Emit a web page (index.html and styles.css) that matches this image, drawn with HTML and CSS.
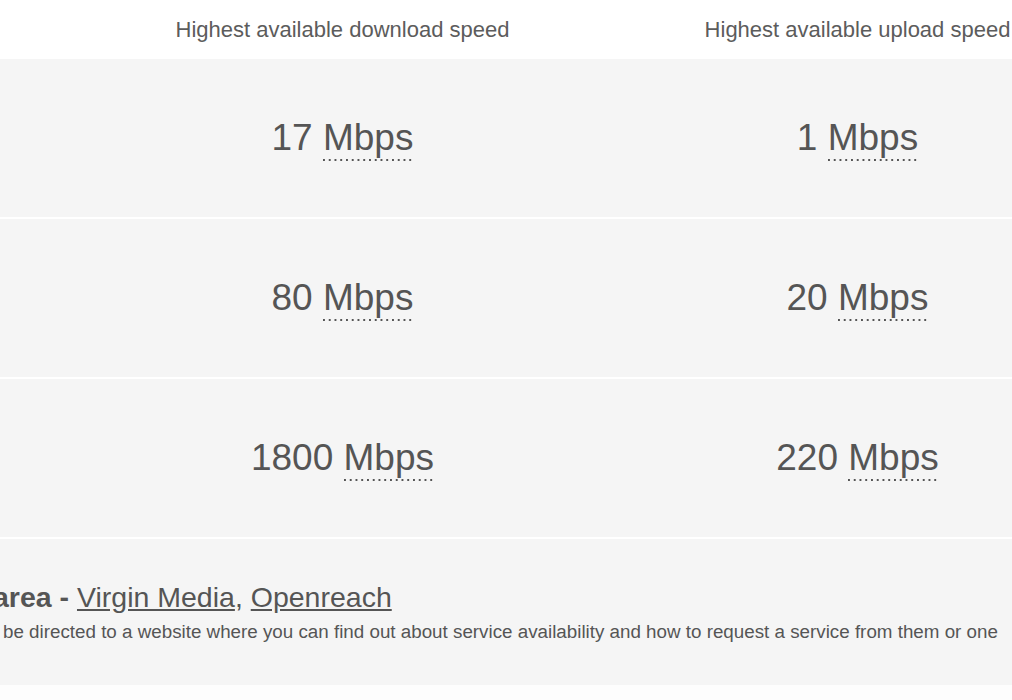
FILE: index.html
```html
<!DOCTYPE html>
<html lang="en">
<head>
    <meta charset="UTF-8">
    <meta name="viewport" content="width=device-width, initial-scale=1.0">
    <title>Broadband speeds</title>
    <link rel="stylesheet" href="styles.css">
</head>
<body>

<div class="speeds">
    <div class="row head">
        <div class="cell label"></div>
        <div class="cell">Highest available download speed</div>
        <div class="cell">Highest available upload speed</div>
    </div>
    <div class="row">
        <div class="cell label"></div>
        <div class="cell value">17 <abbr title="Megabits per second">Mbps</abbr></div>
        <div class="cell value">1 <abbr title="Megabits per second">Mbps</abbr></div>
    </div>
    <div class="row">
        <div class="cell label"></div>
        <div class="cell value">80 <abbr title="Megabits per second">Mbps</abbr></div>
        <div class="cell value">20 <abbr title="Megabits per second">Mbps</abbr></div>
    </div>
    <div class="row">
        <div class="cell label"></div>
        <div class="cell value">1800 <abbr title="Megabits per second">Mbps</abbr></div>
        <div class="cell value">220 <abbr title="Megabits per second">Mbps</abbr></div>
    </div>
</div>

<div class="providers">
    <p class="providers-title"><strong>area - </strong><a href="#">Virgin Media</a>, <a href="#">Openreach</a></p>
    <p class="providers-note">be directed to a website where you can find out about service availability and how to request a service from them or one</p>
</div>

</body>
</html>
```

FILE: styles.css
```css
:root {
    --text: #555;
    --row: #f5f5f5;
}
body {
    margin: 0;
    font-family: "Liberation Sans", Arial, sans-serif;
    color: var(--text);
    background: #fdfdfd;
    overflow: hidden;
}
.speeds {
    width: 1115px;
    background: #fff;
}
.row {
    display: grid;
    grid-template-columns: 85px 515px 515px;
    background: var(--row);
    height: 158px;
    align-items: center;
    border-bottom: 2px solid #fff;
}
.row.head {
    background: #fff;
    height: 59px;
    border-bottom: none;
    font-size: 22px;
    color: #5c5c5c;
}
.cell {
    text-align: center;
}
.value {
    font-size: 37px;
}
abbr {
    text-decoration: none;
    padding-bottom: 3px;
    background: linear-gradient(to right, #555 2px, transparent 2px) repeat-x left bottom / 5.75px 2px;
}
.providers {
    background: var(--row);
    padding: 41px 0 41px;
    white-space: nowrap;
    overflow: hidden;
}
.providers p {
    margin: 0;
}
.providers-title {
    font-size: 28.5px;
    line-height: 1.2;
    text-indent: -7px;
}
.providers-title a {
    color: var(--text);
}
.providers-note {
    font-size: 18.8px;
    line-height: 1.2;
    margin-top: 7px !important;
    padding-left: 3px;
}
```
